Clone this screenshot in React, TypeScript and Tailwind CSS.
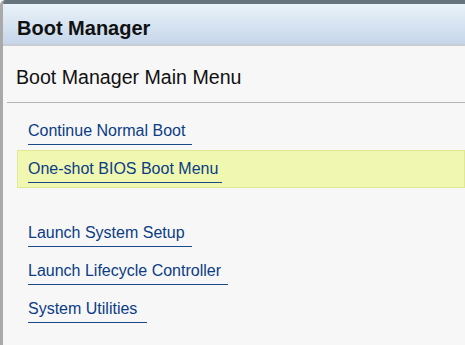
import React from 'react';

const items = [
  { label: 'Continue Normal Boot', width: 164, active: false },
  { label: 'One-shot BIOS Boot Menu', width: 194, active: true },
  null,
  { label: 'Launch System Setup', width: 164, active: false },
  { label: 'Launch Lifecycle Controller', width: 200, active: false },
  { label: 'System Utilities', width: 119, active: false },
];

function App() {
  return (
    <div className="w-[465px] h-[345px] overflow-hidden bg-[#f7f7f7] border-l-[3px] border-[#a9a9a9] rounded-tl-[5px] font-['Liberation_Sans',Arial,sans-serif]">
      {/* Title bar */}
      <div className="h-[46px] border-t-[4px] border-t-[#66757d] border-b-2 border-b-[#c8ced4] bg-gradient-to-b from-[#e9f2f9] to-[#c6d6e9] pl-[14px] pt-[12px]">
        <h1 className="text-[20px] leading-[24px] font-bold text-[#111]">Boot Manager</h1>
      </div>

      <h2 className="mt-[19px] pl-[13px] text-[19.6px] leading-[24px] text-[#111]">Boot Manager Main Menu</h2>
      <div className="mt-[13px] ml-[4px] border-t border-[#b4b4b4]" />

      <div className="pt-[9px]">
        {items.map((item, idx) =>
          item === null ? (
            <div key={idx} className="h-[26px]" />
          ) : (
            <div
              key={idx}
              className={
                'h-[38px] ml-[14px] border pl-[10px] pt-[6px] ' +
                (item.active ? 'bg-[#f0f7b0] border-[#e0e892]' : 'border-transparent')
              }
            >
              <span
                className="inline-block whitespace-nowrap text-[16px] leading-[18px] text-[#0b3c86] pb-[4px] border-b border-[#1a4889]"
                style={{ width: item.width }}
              >
                {item.label}
              </span>
            </div>
          )
        )}
      </div>
    </div>
  );
}

export default App;
